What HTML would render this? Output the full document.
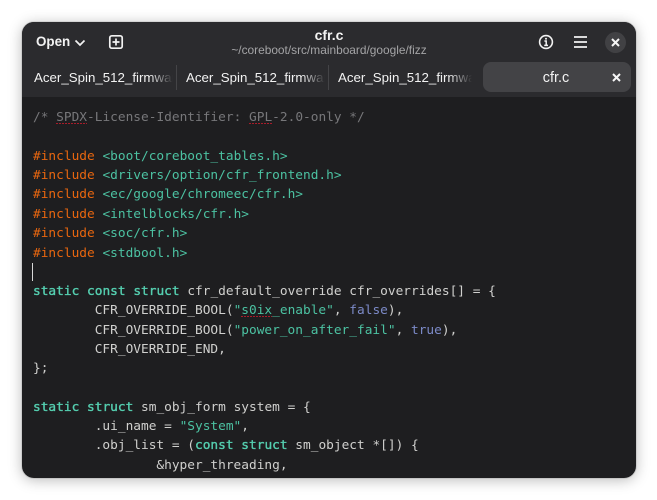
<!DOCTYPE html>
<html><head><meta charset="utf-8"><style>
html,body{margin:0;padding:0;background:#fff;width:657px;height:500px;overflow:hidden}
#win{position:absolute;left:22px;top:22px;width:614px;height:456px;border-radius:12px;overflow:hidden;background:#1e1e20;box-shadow:0 2px 14px rgba(0,0,0,.28),0 0 0 1px rgba(0,0,0,.08)}
#head{position:absolute;left:0;top:0;width:614px;height:75px;background:#2b2b2e}
.t{position:absolute;font-family:"Liberation Sans",sans-serif;white-space:nowrap;color:#f2f2f2}
.tab{font-size:13.3px;top:47px;line-height:18px;width:158px;overflow:hidden}
.fade{position:absolute;top:45px;width:24px;height:22px;background:linear-gradient(to right,rgba(43,43,46,0),#2b2b2e)}
.sep{position:absolute;top:43px;width:1px;height:25px;background:#444447}
#code{position:absolute;left:0;top:0}
.l{position:absolute;left:11px;font-family:"DejaVu Sans Mono",monospace;font-size:12.82px;line-height:19px;white-space:pre;color:#d0d0ce}
.c{color:#77777a}.p{color:#e8660f}.s{color:#4cc2a2}.k{color:#55cfb0;-webkit-text-stroke:.35px #55cfb0}.b{color:#7c8ac8}
.u{background-image:repeating-linear-gradient(90deg,#a81c2a 0 2px,transparent 2px 3px);background-size:100% 1px;background-position:0 13px;background-repeat:no-repeat}
svg{position:absolute}
</style></head><body>
<div id="win">
<div id="head"></div>
<div class="t" style="left:14px;top:11px;font-size:13.4px;font-weight:bold;line-height:18px">Open</div>
<svg style="left:52px;top:16px" width="12" height="10" viewBox="0 0 12 10"><path d="M1.5 2.5L6 7L10.5 2.5" fill="none" stroke="#f2f2f2" stroke-width="1.7"/></svg>
<svg style="left:86px;top:12px" width="16" height="16" viewBox="0 0 16 16"><rect x="1.8" y="1.8" width="12.4" height="12.4" rx="2" fill="none" stroke="#f2f2f2" stroke-width="1.7"/><path d="M8 4.5V11.5M4.5 8H11.5" stroke="#f2f2f2" stroke-width="1.7"/></svg>
<div class="t" style="left:207px;width:200px;text-align:center;top:4px;font-size:14px;font-weight:bold;line-height:18px">cfr.c</div>
<div class="t" style="left:207px;width:200px;text-align:center;top:20px;font-size:11.9px;line-height:16px;color:#a4a4a6">~/coreboot/src/mainboard/google/fizz</div>
<svg style="left:516px;top:12px" width="16" height="16" viewBox="0 0 16 16"><circle cx="8" cy="8" r="6.4" fill="none" stroke="#f2f2f2" stroke-width="1.6"/><path d="M6.4 7H8.2V11.4M6.2 11.4H10" fill="none" stroke="#f2f2f2" stroke-width="1.5"/><circle cx="8" cy="4.8" r="1" fill="#f2f2f2"/></svg>
<svg style="left:551px;top:13px" width="14" height="14" viewBox="0 0 14 14"><path d="M1 2H14M1 7H14M1 12H14" stroke="#f2f2f2" stroke-width="1.7"/></svg>
<div style="position:absolute;left:583px;top:10px;width:21px;height:21px;border-radius:50%;background:#414144"></div>
<svg style="left:589px;top:16px" width="9" height="9" viewBox="0 0 9 9"><path d="M1 1L8 8M8 1L1 8" stroke="#f6f6f6" stroke-width="2"/></svg>

<div class="t tab" style="left:12px">Acer_Spin_512_firmware</div>
<div class="fade" style="left:127px"></div>
<div style="position:absolute;left:151px;top:43px;width:18px;height:26px;background:#2b2b2e"></div>
<div class="sep" style="left:154px"></div>
<div class="t tab" style="left:164px;">Acer_Spin_512_firmware</div>
<div class="fade" style="left:279px"></div>
<div style="position:absolute;left:303px;top:43px;width:13px;height:26px;background:#2b2b2e"></div>
<div class="sep" style="left:306px"></div>
<div class="t tab" style="left:316px;">Acer_Spin_512_firmware</div>
<div class="fade" style="left:426px"></div>
<div style="position:absolute;left:450px;top:43px;width:11px;height:26px;background:#2b2b2e"></div>
<div style="position:absolute;left:461px;top:40px;width:148px;height:30px;border-radius:8px;background:#434346"></div>
<div class="t tab" style="left:460px;width:148px;text-align:center;font-size:14.4px">cfr.c</div>
<svg style="left:590px;top:51px" width="9" height="9" viewBox="0 0 9 9"><path d="M1 1L8 8M8 1L1 8" stroke="#f6f6f6" stroke-width="2"/></svg>

<div id="code">
<div class="l c" style="top:86px">/* <span class="u">SPDX</span>-License-Identifier: <span class="u">GPL</span>-2.0-only */</div>
<div class="l" style="top:125px"><span class="p">#include</span> <span class="s">&lt;boot/coreboot_tables.h&gt;</span></div>
<div class="l" style="top:144px"><span class="p">#include</span> <span class="s">&lt;drivers/option/cfr_frontend.h&gt;</span></div>
<div class="l" style="top:163px"><span class="p">#include</span> <span class="s">&lt;ec/google/chromeec/cfr.h&gt;</span></div>
<div class="l" style="top:183px"><span class="p">#include</span> <span class="s">&lt;intelblocks/cfr.h&gt;</span></div>
<div class="l" style="top:202px"><span class="p">#include</span> <span class="s">&lt;soc/cfr.h&gt;</span></div>
<div class="l" style="top:222px"><span class="p">#include</span> <span class="s">&lt;stdbool.h&gt;</span></div>
<div style="position:absolute;left:10px;top:241px;width:1px;height:18px;background:#d8d8d8"></div>
<div class="l" style="top:260px"><span class="k">static</span> <span class="k">const</span> <span class="k">struct</span> cfr_default_override cfr_overrides[] = {</div>
<div class="l" style="top:279px">        CFR_OVERRIDE_BOOL(<span class="s">"<span class="u">s0ix</span>_enable"</span>, <span class="b">false</span>),</div>
<div class="l" style="top:299px">        CFR_OVERRIDE_BOOL(<span class="s">"power_on_after_fail"</span>, <span class="b">true</span>),</div>
<div class="l" style="top:318px">        CFR_OVERRIDE_END,</div>
<div class="l" style="top:337px">};</div>
<div class="l" style="top:376px"><span class="k">static</span> <span class="k">struct</span> sm_obj_form system = {</div>
<div class="l" style="top:395px">        .ui_name = <span class="s">"System"</span>,</div>
<div class="l" style="top:414px">        .obj_list = (<span class="k">const</span> <span class="k">struct</span> sm_object *[]) {</div>
<div class="l" style="top:434px">                &amp;hyper_threading,</div>
</div>
</div>
</body></html>
